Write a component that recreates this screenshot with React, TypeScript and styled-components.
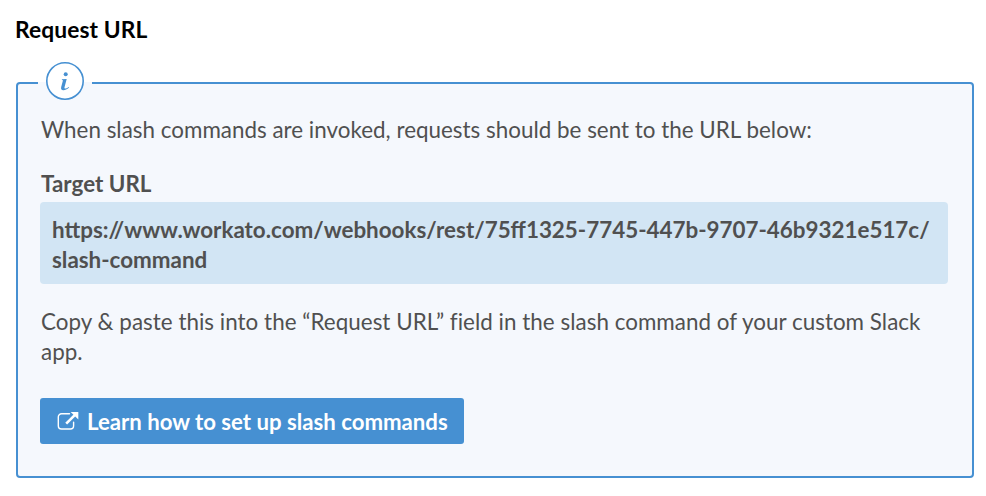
import React from "react";
import styled, { createGlobalStyle } from "styled-components";

const GlobalStyle = createGlobalStyle`
  * { box-sizing: border-box; }
  body { margin: 0; background: #fff; }
`;

const Page = styled.main`
  height: 496px;
  padding: 14px 12px 0 16px;
  font-family: Lato, sans-serif;
  font-size: 22.4px;
  line-height: 30px;
  color: #505050;
`;

const Heading = styled.h2`
  margin: 0 0 38px -1px;
  font-size: 22.8px;
  font-weight: 700;
  letter-spacing: 0.08px;
  color: #000;
`;

const Panel = styled.section`
  position: relative;
  height: 396px;
  padding: 31px 24px 0 22px;
  border: 2px solid #4690d2;
  border-radius: 4px;
  background: #f5f8fd;
`;

const Badge = styled.div`
  position: absolute;
  top: -24px;
  left: 20px;
  width: 54px;
  height: 42px;
  background: linear-gradient(#fff 22px, #f5f8fd 22px);
  svg { display: block; margin-left: 7px; }
`;

const Text = styled.p<{ $tracking?: number }>`
  margin: 0 0 0 1px;
  letter-spacing: ${(p) => p.$tracking ?? 0}px;
  font-variant-ligatures: common-ligatures;
  white-space: nowrap;
`;

const Label = styled.h3`
  margin: 24px 0 3px 1px;
  font-size: 22.4px;
  font-weight: 700;
`;

const UrlBox = styled.div`
  height: 82px;
  margin-bottom: 23px;
  padding: 13px 12px;
  border-radius: 4px;
  background: #d2e5f4;
  font-weight: 700;
`;

const Button = styled.button`
  display: flex;
  align-items: center;
  gap: 8px;
  width: 424px;
  height: 46px;
  margin-top: 31px;
  padding: 0 0 0 17px;
  border: 0;
  border-radius: 3px;
  background: #4690d2;
  color: #fff;
  font: 700 22.2px Lato, sans-serif;
  white-space: nowrap;
`;

export default function App() {
  return (
    <Page>
      <GlobalStyle />
      <Heading>Request URL</Heading>
      <Panel>
        <Badge>
          <svg width="40" height="42" viewBox="0 0 40 42">
            <circle cx="20" cy="21" r="18.2" fill="#fff" stroke="#4690d2" strokeWidth="1.6" />
            <circle cx="20.7" cy="14.3" r="2" fill="#4690d2" />
            <path
              d="M17 19.3 21.7 18.9 19.5 27.3C19.1 29 20.7 29 23.7 26.9L24.2 27.6C21.8 29.6 19.9 30.4 18.3 30.3C16.3 30.2 15.7 28.8 16.2 27L18 20.2 16.8 20Z"
              fill="#4690d2"
            />
          </svg>
        </Badge>
        <Text $tracking={0.01}>When slash commands are invoked, requests should be sent to the URL below:</Text>
        <Label>Target URL</Label>
        <UrlBox>
          https://www.workato.com/webhooks/rest/75ff1325-7745-447b-9707-46b9321e517c/
          <br />
          slash-command
        </UrlBox>
        <Text $tracking={0.03}>
          Copy &amp; paste this into the “Request URL” field in the slash command of your custom Slack
          <br />
          app.
        </Text>
        <Button>
          <svg width="22" height="22" viewBox="0 0 22 22" fill="none" stroke="#fff">
            <path d="M12.5 3.7H4.5A3.2 3.2 0 0 0 1.3 6.9v8.9A3.2 3.2 0 0 0 4.5 19h8.9a3.2 3.2 0 0 0 3.2-3.2v-3.6" strokeWidth="1.4" strokeLinecap="round" />
            <path d="M9.2 13.6 18.5 4.3" strokeWidth="2.6" />
            <path d="M13.7 2h7.6v7.6Z" fill="#fff" stroke="none" />
          </svg>
          Learn how to set up slash commands
        </Button>
      </Panel>
    </Page>
  );
}
